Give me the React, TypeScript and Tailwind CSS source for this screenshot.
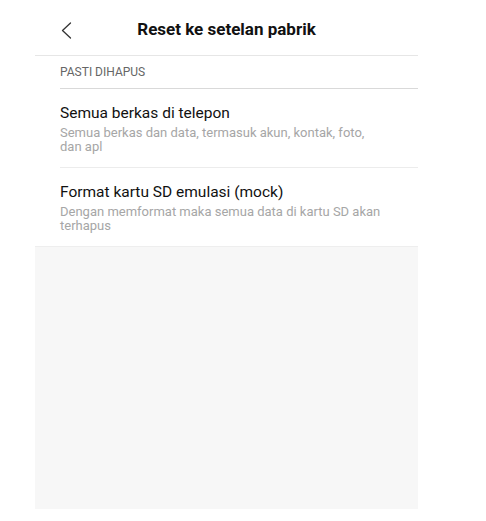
import React from 'react';

const items = [
  {
    title: 'Semua berkas di telepon',
    desc: 'Semua berkas dan data, termasuk akun, kontak, foto, dan apl',
  },
  {
    title: 'Format kartu SD emulasi (mock)',
    desc: 'Dengan memformat maka semua data di kartu SD akan terhapus',
  },
];

export default function App() {
  return (
    <div className="w-[486px] h-[521px] bg-white" style={{ fontFamily: 'Roboto, "Noto Sans", sans-serif' }}>
      <div className="ml-[35px] w-[383px] h-[509px] bg-[#f7f7f7] flex flex-col">
        <div className="bg-white">
          {/* header */}
          <div className="relative h-[56px] pt-[4px] flex items-center justify-center border-b border-[#e6e6e6]">
            <button className="absolute left-[26px] top-[22px] text-[#333]">
              <svg width="11" height="17" viewBox="0 0 11 17" fill="none">
                <path d="M9.5 1 L1.5 8.5 L9.5 16" stroke="currentColor" strokeWidth="1.3" strokeLinecap="round" strokeLinejoin="round" />
              </svg>
            </button>
            <h1 className="text-[17px] font-bold text-[#111]">Reset ke setelan pabrik</h1>
          </div>

          <div className="pl-[25px]">
            <div className="h-[33px] flex items-center border-b border-[#d9d9d9] text-[12px] text-[#666] uppercase">
              Pasti dihapus
            </div>
            {items.map((it, i) => (
              <div
                key={it.title}
                className={`pt-[14px] pb-[13px] pr-[35px] ${i === 0 ? 'border-b border-[#ececec]' : ''}`}
              >
                <div className="text-[15.5px] leading-[20px] text-[#111]">{it.title}</div>
                <div className="mt-[3px] text-[13px] leading-[14px] text-[#a6a6a6]">{it.desc}</div>
              </div>
            ))}
          </div>
        </div>
        <div className="border-t border-[#eeeeee]" />
      </div>
    </div>
  );
}
